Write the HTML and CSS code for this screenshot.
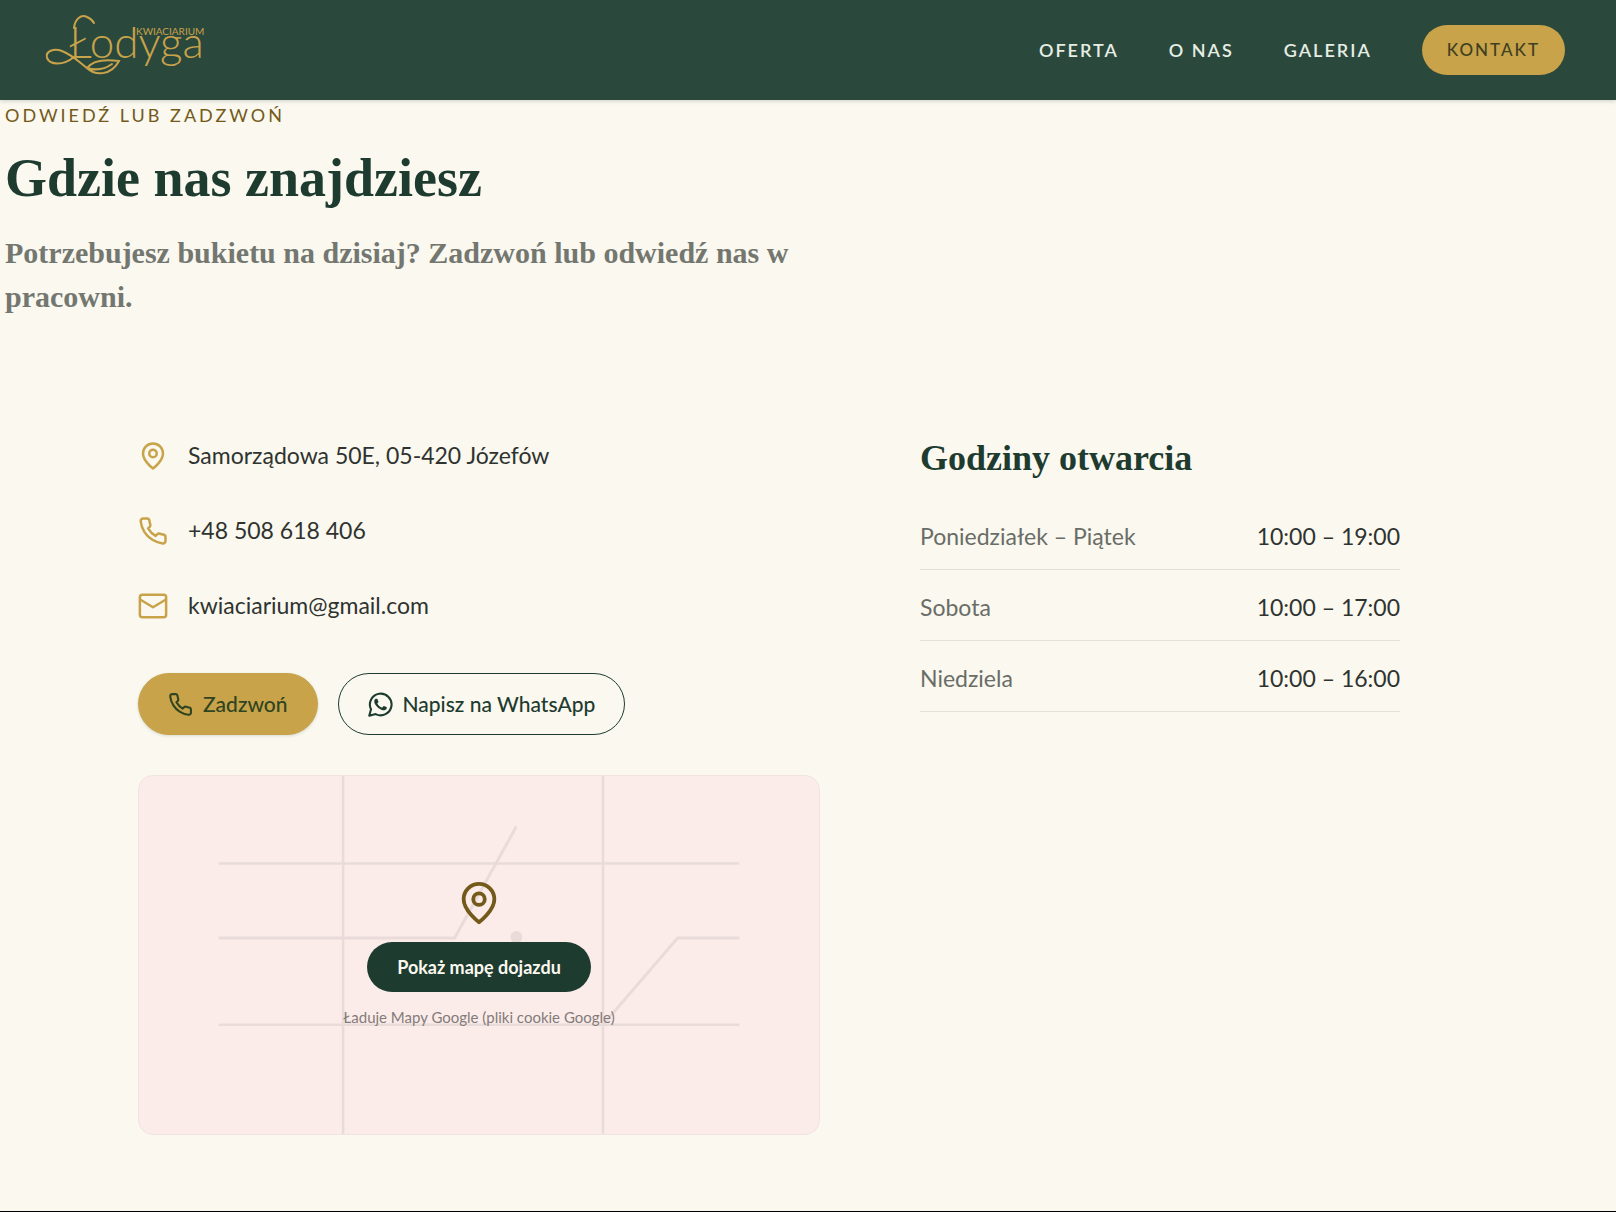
FILE: index.html
```html
<!DOCTYPE html>
<html lang="pl">
<head>
<meta charset="utf-8">
<meta name="viewport" content="width=device-width, initial-scale=1">
<title>Kwiaciarium Łodyga – kontakt</title>
<link rel="stylesheet" href="styles.css">
</head>
<body>
<header class="site-header">
  <a class="logo" href="#" aria-label="Kwiaciarium Łodyga">
    <svg width="160" height="64" viewBox="0 0 160 64" aria-hidden="true">
      <text class="logo-word" x="24" y="44" font-size="44">Łodyga</text>
      <text class="logo-tag" x="91" y="21" font-size="10">KWIACIARIUM</text>
      <g fill="none" stroke="currentColor" stroke-width="2" stroke-linecap="round">
        <path d="M29 14C30 5 36 0 42 3Q47 5 49 9"/>
        <path d="M29 43C18 52 5 51 2 44C0 37 9 34 17 37C29 42 34 48 42 54C50 62 66 62 74 47C60 45 48 46 42 54C52 57 60 55 67 50"/>
      </g>
    </svg>
  </a>
  <nav class="nav" aria-label="Główna">
    <a href="#oferta">Oferta</a>
    <a href="#o-nas">O nas</a>
    <a href="#galeria">Galeria</a>
    <a class="nav-cta" href="#kontakt">Kontakt</a>
  </nav>
</header>

<main class="contact" id="kontakt">
  <div class="intro">
    <p class="eyebrow">Odwiedź lub zadzwoń</p>
    <h2 class="title">Gdzie nas znajdziesz</h2>
    <p class="lead">Potrzebujesz bukietu na dzisiaj? Zadzwoń lub odwiedź nas w pracowni.</p>
  </div>

  <div class="columns">
    <section class="details">
      <ul class="contact-list">
        <li>
          <svg class="icon" viewBox="0 0 24 24"><path d="M20 10c0 6-8 12-8 12s-8-6-8-12a8 8 0 0 1 16 0Z"/><circle cx="12" cy="10" r="3"/></svg>
          <span>Samorządowa 50E, 05-420 Józefów</span>
        </li>
        <li>
          <svg class="icon" viewBox="0 0 24 24"><path d="M22 16.92v3a2 2 0 0 1-2.18 2 19.79 19.79 0 0 1-8.63-3.07 19.5 19.5 0 0 1-6-6 19.79 19.79 0 0 1-3.07-8.67A2 2 0 0 1 4.11 2h3a2 2 0 0 1 2 1.72 12.84 12.84 0 0 0 .7 2.81 2 2 0 0 1-.45 2.11L8.09 9.91a16 16 0 0 0 6 6l1.27-1.27a2 2 0 0 1 2.11-.45 12.84 12.84 0 0 0 2.81.7A2 2 0 0 1 22 16.92z"/></svg>
          <a href="tel:+48508618406">+48 508 618 406</a>
        </li>
        <li>
          <svg class="icon" viewBox="0 0 24 24"><rect x="1.500" y="3" width="21" height="18" rx="2"/><path d="m2 7 10 6 10-6"/></svg>
          <a href="mailto:kwiaciarium@gmail.com">kwiaciarium@gmail.com</a>
        </li>
      </ul>

      <div class="actions">
        <a class="btn btn-gold" href="tel:+48508618406">
          <svg class="icon" viewBox="0 0 24 24"><path d="M22 16.92v3a2 2 0 0 1-2.18 2 19.79 19.79 0 0 1-8.63-3.07 19.5 19.5 0 0 1-6-6 19.79 19.79 0 0 1-3.07-8.67A2 2 0 0 1 4.11 2h3a2 2 0 0 1 2 1.72 12.84 12.84 0 0 0 .7 2.81 2 2 0 0 1-.45 2.11L8.09 9.91a16 16 0 0 0 6 6l1.27-1.27a2 2 0 0 1 2.11-.45 12.84 12.84 0 0 0 2.81.7A2 2 0 0 1 22 16.92z"/></svg>
          Zadzwoń
        </a>
        <a class="btn btn-outline" href="https://wa.me/48508618406">
          <svg class="icon icon-solid" viewBox="0 0 24 24"><path d="M17.472 14.382c-.297-.149-1.758-.867-2.030-.967-.273-.099-.471-.148-.670.150-.197.297-.767.966-.940 1.164-.173.199-.347.223-.644.075-.297-.150-1.255-.463-2.390-1.475-.883-.788-1.480-1.761-1.653-2.059-.173-.297-.018-.458.130-.606.134-.133.298-.347.446-.520.149-.174.198-.298.298-.497.099-.198.050-.371-.025-.520-.075-.149-.669-1.612-.916-2.207-.242-.579-.487-.500-.669-.510-.173-.008-.371-.010-.570-.010-.198 0-.520.074-.792.372-.272.297-1.040 1.016-1.040 2.479 0 1.462 1.065 2.875 1.213 3.074.149.198 2.096 3.200 5.077 4.487.709.306 1.262.489 1.694.625.712.227 1.360.195 1.871.118.571-.085 1.758-.719 2.006-1.413.248-.694.248-1.289.173-1.413-.074-.124-.272-.198-.570-.347"/><path class="ring" d="M1.200 22.800l1.700-6.200A10.400 10.400 0 1 1 7.400 21.200z"/></svg>
          Napisz na WhatsApp
        </a>
      </div>

      <div class="map">
        <svg class="map-art" viewBox="0 0 683 360" preserveAspectRatio="xMidYMid slice" aria-hidden="true">
          <g fill="none" stroke="currentColor" stroke-width="3">
            <path d="M205 0V360M466 0V360" stroke-width="2.500"/>
            <path d="M80 88H603M80 250H603" stroke-width="2.500"/>
            <path d="M80 163H317L379 51M466 250L541 163H603"/>
          </g>
          <circle cx="379" cy="162" r="6" fill="currentColor"/>
        </svg>
        <div class="map-content">
          <svg class="icon map-pin" viewBox="0 0 24 24"><path d="M20 10c0 6-8 12-8 12s-8-6-8-12a8 8 0 0 1 16 0Z"/><circle cx="12" cy="10" r="3"/></svg>
          <button class="map-button" type="button">Pokaż mapę dojazdu</button>
          <p class="map-note">Ładuje Mapy Google (pliki cookie Google)</p>
        </div>
      </div>
    </section>

    <section class="hours">
      <h3 class="hours-title" id="godziny">Godziny otwarcia</h3>
      <table class="hours-table" aria-labelledby="godziny">
        <tbody>
          <tr><th scope="row">Poniedziałek – Piątek</th><td>10:00 – 19:00</td></tr>
          <tr><th scope="row">Sobota</th><td>10:00 – 17:00</td></tr>
          <tr><th scope="row">Niedziela</th><td>10:00 – 16:00</td></tr>
        </tbody>
      </table>
    </section>
  </div>
</main>
<footer class="site-footer"></footer>
</body>
</html>
```
FILE: styles.css
```css
:root {
  --green: #1e3b30;
  --header: #2b483d;
  --gold: #c8a34a;
  --bronze: #735a1a;
  --cream: #faf8ef;
  --blush: #fbecea;
  --ink: #2f332f;
  --muted: #6a6d67;
  --serif: "Liberation Serif", serif;
  --sans: Lato, sans-serif;
}

* { box-sizing: border-box; }

body {
  margin: 0;
  background: var(--cream);
  color: var(--ink);
  font-family: var(--sans);
  font-size: 23px;
  line-height: 35px;
}

h2, h3, p, ul { margin: 0; padding: 0; }
a { color: inherit; text-decoration: none; }

.icon {
  flex: none;
  width: 30px;
  height: 30px;
  fill: none;
  stroke: currentColor;
  stroke-width: 2;
  stroke-linecap: round;
  stroke-linejoin: round;
}

/* Header */
.site-header {
  display: flex;
  align-items: center;
  justify-content: space-between;
  height: 100px;
  padding: 0 51px 0 45px;
  background: var(--header);
  box-shadow: 0 1px 4px rgba(30, 59, 48, .2);
}
.logo { display: flex; color: var(--gold); margin-top: -8px; }
.logo svg { overflow: visible; }
.logo-word { font-family: var(--sans); font-weight: 300; fill: currentColor; }
.logo-tag { font-family: var(--sans); fill: currentColor; }

.nav {
  display: flex;
  align-items: center;
  gap: 50px;
  color: #e6eee4;
  font-size: 18px;
  font-weight: 600;
  line-height: 26px;
  letter-spacing: 2px;
  text-transform: uppercase;
}
.nav-cta {
  padding: 12px 25px;
  border-radius: 25px;
  background: var(--gold);
  color: #3f4020;
  font-size: 17px;
  font-weight: 500;
}

/* Intro */
.contact { padding-bottom: 76px; }
.intro { padding: 0 5px; margin-bottom: 119px; }
.eyebrow {
  color: var(--bronze);
  font-size: 18px;
  line-height: 30px;
  letter-spacing: 3px;
  text-transform: uppercase;
}
.title {
  margin: 18px 0 23px;
  color: var(--green);
  font-family: var(--serif);
  font-size: 54px;
  line-height: 60px;
}
.lead {
  max-width: 820px;
  color: #737770;
  font-family: var(--serif);
  font-size: 30px;
  font-weight: 700;
  line-height: 44px;
}

/* Columns */
.columns {
  display: grid;
  grid-template-columns: 11fr 9fr;
  gap: 100px;
  max-width: 1340px;
  margin: 0 auto;
}
.contact-list {
  display: flex;
  flex-direction: column;
  gap: 40px;
  list-style: none;
}
.contact-list li { display: flex; align-items: center; gap: 20px; }
.contact-list .icon { color: var(--gold); }

.actions { display: flex; flex-wrap: wrap; gap: 20px; margin: 50px 0 40px; }
.btn {
  display: flex;
  align-items: center;
  gap: 10px;
  padding: 15px 29px;
  border: 1px solid var(--green);
  border-radius: 31px;
  color: var(--green);
  font-size: 21px;
  font-weight: 500;
  line-height: 30px;
}
.btn .icon { width: 25px; height: 25px; }
.btn-gold {
  border-color: var(--gold);
  background: var(--gold);
  color: #2f4420;
  box-shadow: 0 1px 3px rgba(30, 59, 48, .15);
}
.icon-solid { fill: currentColor; stroke: none; }
.icon-solid .ring { fill: none; stroke: currentColor; stroke-width: 2; }

/* Map */
.map {
  position: relative;
  display: flex;
  align-items: center;
  justify-content: center;
  min-height: 360px;
  overflow: hidden;
  border: 1px solid #f1e4e0;
  border-radius: 15px;
  background: var(--blush);
}
.map-art {
  position: absolute;
  inset: 0;
  width: 100%;
  height: 100%;
  color: #e8dbd9;
}
.map-content {
  position: relative;
  display: flex;
  flex-direction: column;
  align-items: center;
}
.map-pin { width: 46px; height: 46px; color: var(--bronze); }
.map-button {
  margin: 16px 0 12px;
  padding: 12px 30px;
  border: 0;
  border-radius: 25px;
  background: var(--green);
  color: #fbf8ef;
  font-family: inherit;
  font-size: 18px;
  font-weight: 700;
  line-height: 26px;
}
.map-note { color: #837b78; font-size: 15px; line-height: 26px; }

/* Opening hours */
.hours { max-width: 480px; }
.hours-title {
  margin-bottom: 21px;
  color: var(--green);
  font-family: var(--serif);
  font-size: 36px;
  line-height: 40px;
}
.hours-table { width: 100%; border-collapse: collapse; }
.hours-table th,
.hours-table td {
  padding: 20px 0 15px;
  border-bottom: 1px solid #e2e2da;
  font-weight: 400;
}
.hours-table th { color: var(--muted); text-align: left; }
.hours-table td { text-align: right; }

.site-footer { border-top: 1px solid #000; }
```
